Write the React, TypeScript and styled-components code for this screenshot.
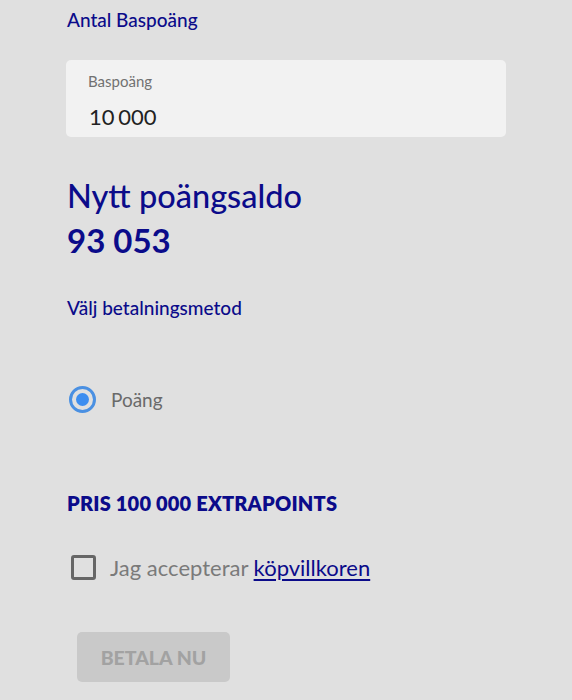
import React from "react";
import styled, { createGlobalStyle } from "styled-components";

const Global = createGlobalStyle`
  html, body { margin: 0; padding: 0; background: #e0e0e0; }
  body { font-family: Lato, "Open Sans", sans-serif; }
`;

const NAVY = "#0b0b8a";

const Page = styled.div`
  width: 572px;
  height: 700px;
  box-sizing: border-box;
  padding: 9px 66px 0 67px;
  background: #e0e0e0;
  display: flex;
  flex-direction: column;
  overflow: hidden;
`;

const SectionLabel = styled.div<{ $mt?: number; $size?: number }>`
  color: ${NAVY};
  font-size: ${(p) => p.$size ?? 18}px;
  font-weight: 500;
  line-height: 22px;
  margin-top: ${(p) => p.$mt ?? 0}px;
`;

const InputBox = styled.div`
  margin-top: 29px;
  margin-left: -1px;
  height: 77px;
  box-sizing: border-box;
  background: #f2f2f2;
  border-radius: 5px;
  padding: 12px 22px 0;
  display: flex;
  flex-direction: column;
`;

const InputLabel = styled.div`
  color: #717171;
  font-size: 15px;
  line-height: 18px;
`;

const InputValue = styled.div`
  color: #222;
  font-size: 22px;
  line-height: 26px;
  margin-top: 14px;
  margin-left: 1px;
  word-spacing: -2px;
`;

const Heading = styled.div`
  margin-top: 40px;
  color: ${NAVY};
  font-size: 32.5px;
  line-height: 38px;
  font-weight: 500;
`;

const BigNumber = styled.div`
  color: ${NAVY};
  font-size: 33px;
  line-height: 44px;
  font-weight: 700;
  margin-top: 3px;
`;

const Row = styled.label<{ $mt: number }>`
  display: flex;
  align-items: center;
  margin-top: ${(p) => p.$mt}px;
`;

const Radio = styled.span`
  width: 27px;
  height: 27px;
  box-sizing: border-box;
  border: 3px solid #4a90e2;
  border-radius: 50%;
  display: flex;
  align-items: center;
  justify-content: center;
  margin-left: 2px;
  &::after {
    content: "";
    width: 13px;
    height: 13px;
    border-radius: 50%;
    background: #3d8ef0;
  }
`;

const RadioText = styled.span`
  color: #6a6a6a;
  font-size: 19px;
  margin-left: 15px;
`;

const Price = styled.div`
  margin-top: 79px;
  color: ${NAVY};
  font-size: 20px;
  font-weight: 800;
  line-height: 22px;
  letter-spacing: 0.2px;
`;

const Checkbox = styled.span`
  width: 25px;
  height: 25px;
  box-sizing: border-box;
  border: 3px solid #666;
  border-radius: 3px;
  margin-left: 4px;
`;

const CheckText = styled.span`
  color: #7a7a7a;
  font-size: 22px;
  margin-left: 14px;
`;

const Link = styled.a`
  color: ${NAVY};
  text-decoration: underline;
  text-underline-offset: 3px;
`;

const PayButton = styled.button`
  margin-top: 51px;
  margin-left: 10px;
  width: 153px;
  height: 50px;
  border: none;
  border-radius: 5px;
  background: #c9c9c9;
  color: #a2a2a2;
  font-family: Lato, sans-serif;
  font-size: 19.5px;
  font-weight: 900;
  align-self: flex-start;
`;

export default function App() {
  return (
    <>
      <Global />
      <Page>
        <SectionLabel $size={19}>Antal Baspoäng</SectionLabel>
        <InputBox>
          <InputLabel>Baspoäng</InputLabel>
          <InputValue>10 000</InputValue>
        </InputBox>
        <Heading>Nytt poängsaldo</Heading>
        <BigNumber>93 053</BigNumber>
        <SectionLabel $mt={35} $size={19}>Välj betalningsmetod</SectionLabel>
        <Row $mt={67}>
          <Radio />
          <RadioText>Poäng</RadioText>
        </Row>
        <Price>PRIS 100 000 EXTRAPOINTS</Price>
        <Row $mt={40}>
          <Checkbox />
          <CheckText>
            Jag accepterar <Link href="#">köpvillkoren</Link>
          </CheckText>
        </Row>
        <PayButton>BETALA NU</PayButton>
      </Page>
    </>
  );
}
